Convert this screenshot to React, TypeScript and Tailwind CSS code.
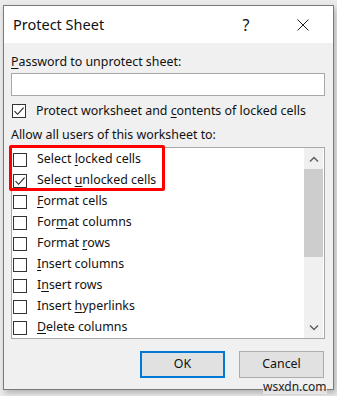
import React from "react";

const items = [
  { pre: "Select ", key: "l", post: "ocked cells", checked: false },
  { pre: "Select ", key: "u", post: "nlocked cells", checked: true },
  { pre: "", key: "F", post: "ormat cells", checked: false },
  { pre: "For", key: "m", post: "at columns", checked: false },
  { pre: "Format ", key: "r", post: "ows", checked: false },
  { pre: "", key: "I", post: "nsert columns", checked: false },
  { pre: "I", key: "n", post: "sert rows", checked: false },
  { pre: "Insert ", key: "h", post: "yperlinks", checked: false },
  { pre: "", key: "D", post: "elete columns", checked: false },
];

function CheckBox({ checked }: { checked: boolean }) {
  return (
    <div className="w-[14px] h-[14px] border border-[#333333] bg-white flex items-center justify-center shrink-0">
      {checked && (
        <svg width="12" height="12" viewBox="0 0 12 12">
          <path d="M1.5 6.2 L4.6 9.3 L10.6 2.6" fill="none" stroke="#222" strokeWidth="1.1" />
        </svg>
      )}
    </div>
  );
}

function Label({ pre, k, post }: { pre: string; k: string; post: string }) {
  return (
    <span>
      {pre}
      <span className="underline underline-offset-2">{k}</span>
      {post}
    </span>
  );
}

export default function App() {
  return (
    <div
      className="w-[337px] h-[396px] bg-[#ebebeb] pt-[5px] pl-[3px] relative text-[12.4px] text-[#111]"
      style={{ fontFamily: '"Noto Sans", "Open Sans", sans-serif' }}
    >
      <div className="w-[331px] h-[385px] border border-[#7a7a7a] bg-[#f0f0f0] shadow-[2px_3px_6px_rgba(0,0,0,0.25)] flex flex-col">
        <div className="h-[37px] bg-white flex items-center pl-[9px] shrink-0">
          <span className="text-[14.5px] flex-1">Protect Sheet</span>
          <span className="text-[16px] w-[20px] text-center mr-[41px]">?</span>
          <svg width="12" height="12" viewBox="0 0 12 12" className="mr-[24px]">
            <path d="M0.5 0.5 L11.5 11.5 M11.5 0.5 L0.5 11.5" stroke="#222" strokeWidth="1" />
          </svg>
        </div>
        <div className="pl-[7px] pr-[7px] flex flex-col">
          <div className="mt-[11px] leading-[16px]">
            <Label pre="" k="P" post="assword to unprotect sheet:" />
          </div>
          <div className="mt-[3px] w-[314px] h-[23px] border border-[#a8a8a8] bg-white" />
          <div className="mt-[7px] flex items-center gap-[10px] h-[16px] pl-[1px]">
            <CheckBox checked />
            <span>
              Protect worksheet and <span className="underline underline-offset-2">c</span>ontents of locked cells
            </span>
          </div>
          <div className="mt-[8px] leading-[16px]">Allow all users of this worksheet to:</div>
          <div className="mt-[4px] w-[314px] h-[192px] border border-[#a8a8a8] bg-white relative flex">
            <div className="flex-1 flex flex-col pl-[1px] pt-[1px]">
              {items.map((it, i) => (
                <div key={i} className="h-[21px] flex items-center gap-[10px]">
                  <CheckBox checked={it.checked} />
                  <Label pre={it.pre} k={it.key} post={it.post} />
                </div>
              ))}
            </div>
            <div className="w-[19px] mr-[1px] bg-[#f0f0f0] flex flex-col">
              <div className="h-[21px] flex items-center justify-center">
                <svg width="10" height="6" viewBox="0 0 10 6">
                  <path d="M1 5.5 L5 1.5 L9 5.5" fill="none" stroke="#606060" strokeWidth="1.5" />
                </svg>
              </div>
              <div className="h-[88px] bg-[#cdcdcd]" />
              <div className="flex-1" />
              <div className="h-[21px] flex items-center justify-center">
                <svg width="10" height="6" viewBox="0 0 10 6">
                  <path d="M1 0.5 L5 4.5 L9 0.5" fill="none" stroke="#606060" strokeWidth="1.5" />
                </svg>
              </div>
            </div>
            <div className="absolute left-[-3px] top-[-3px] w-[156px] h-[46px] border-[3px] border-[#ff0000] rounded-[2px]" />
          </div>
          <div className="mt-[12px] flex justify-end gap-[14px] pr-[2px]">
            <button className="w-[85px] h-[27px] border-2 border-[#0078d7] bg-[#e1e1e1]">OK</button>
            <button className="w-[85px] h-[27px] border border-[#adadad] bg-[#e1e1e1]">Cancel</button>
          </div>
        </div>
      </div>
      <div className="absolute left-[263px] top-[380px] text-[12px] text-[#222] bg-[#f0f0f0]/70 leading-[14px]">
        wsxdn.com
      </div>
    </div>
  );
}
